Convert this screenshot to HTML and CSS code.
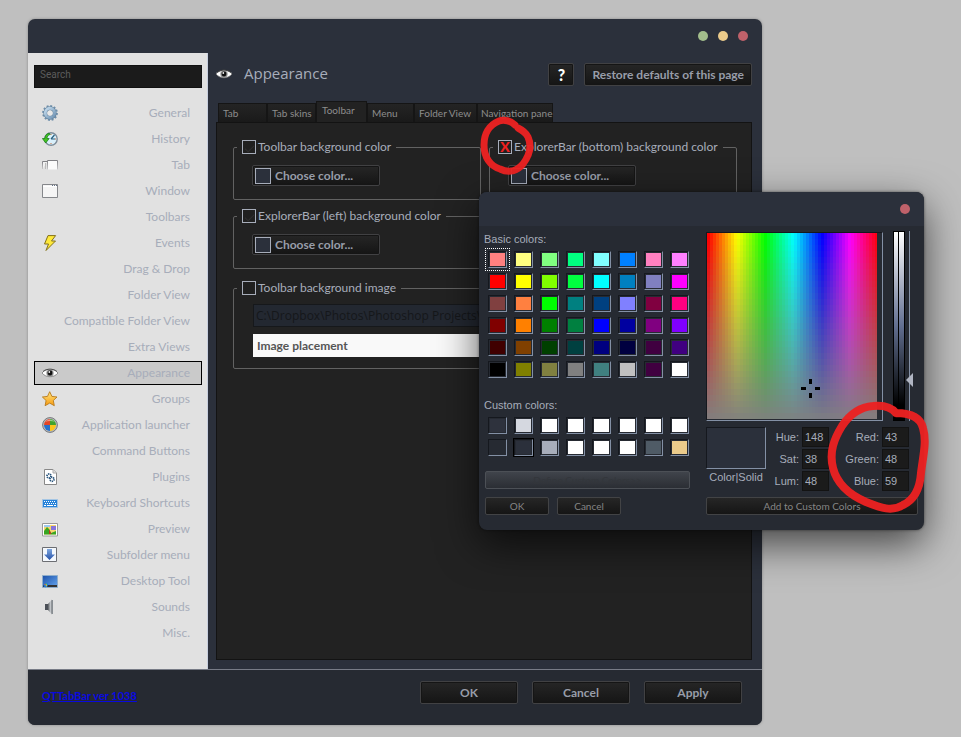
FILE: index.html
```html
<!DOCTYPE html>
<html lang="en">
<head>
<meta charset="utf-8">
<title>Appearance</title>
<link rel="stylesheet" href="styles.css">
</head>
<body>
<svg class="defs" width="0" height="0" aria-hidden="true">
  <defs>
    <linearGradient id="steel" x1="0" y1="0" x2="1" y2="1"><stop offset="0" stop-color="#c5dcee"/><stop offset="1" stop-color="#6f93b4"/></linearGradient>
    <linearGradient id="fade" x1="0" y1="0" x2="0" y2="1"><stop offset="0" stop-color="#808084"/><stop offset="1" stop-color="#c8c8ca"/></linearGradient>
    <linearGradient id="gold" x1="0" y1="0" x2="0" y2="1"><stop offset="0" stop-color="#ffe680"/><stop offset="1" stop-color="#f79a10"/></linearGradient>
    <linearGradient id="arrow" x1="0" y1="0" x2="0" y2="1"><stop offset="0" stop-color="#7fa8e0"/><stop offset="1" stop-color="#2450a8"/></linearGradient>
    <linearGradient id="desk" x1="0" y1="0" x2="1" y2="1"><stop offset="0" stop-color="#1a4fa8"/><stop offset="1" stop-color="#68a8f0"/></linearGradient>
    <linearGradient id="horn" x1="0" y1="0" x2="1" y2="0"><stop offset="0" stop-color="#55585c"/><stop offset=".6" stop-color="#c5c9cd"/><stop offset="1" stop-color="#787c80"/></linearGradient>
    <symbol id="eye" viewBox="0 0 16 16">
      <path d="M0 8C4 3 12 3 16 8C12 13 4 13 0 8Z" fill="#fff" stroke="#777" stroke-width=".8"/>
      <path d="M1 6.500C4.500 3.400 11.500 3.400 15 6.500" fill="none" stroke="#333" stroke-width=".8"/>
      <circle cx="8" cy="8" r="3.600" fill="#888"/><circle cx="8" cy="8" r="2.400" fill="#111"/><circle cx="7.300" cy="7" r=".9" fill="#eee"/>
    </symbol>
  </defs>
</svg>
<div class="desktop">
  <main class="window">
    <div class="titlebar">
      <button class="dot green" aria-label="Minimize"></button>
      <button class="dot yellow" aria-label="Maximize"></button>
      <button class="dot red" aria-label="Close"></button>
    </div>
    <div class="content">
      <nav class="sidebar">
        <input class="search" type="search" placeholder="Search" aria-label="Search">
        <ul class="menu">
          <li><a href="#"><svg viewBox="0 0 16 16"><circle cx="8" cy="8" r="6.800" fill="none" stroke="#6f8faa" stroke-width="2.200" stroke-dasharray="1.900 1.660"/><circle cx="8" cy="8" r="4.700" fill="none" stroke="#64829c" stroke-width="4"/><circle cx="8" cy="8" r="4.700" fill="none" stroke="url(#steel)" stroke-width="2.900"/><circle cx="8" cy="8" r="2.600" fill="#e8e8e8"/></svg><span>General</span></a></li>
          <li><a href="#"><svg viewBox="0 0 16 16"><circle cx="9" cy="8" r="6.200" fill="#d9effa" stroke="#7d8c99" stroke-width="1.400"/><path d="M9 8L12.500 4M9 8H13" stroke="#286080" stroke-width="1.200"/><path d="M9 3v1M14 8h-1M9 13v-1" stroke="#cc6c3c"/><path d="M7 2.200C4 3 2.800 5.400 2.800 7.500H.4L3.700 12L7.200 7.500H5C5 5.500 6.200 4 8.300 3.300Z" fill="#43c321" stroke="#137615" stroke-width=".7"/></svg><span>History</span></a></li>
          <li><a href="#"><svg viewBox="0 0 16 16"><path d="M.5 12V4.500H5.500" fill="#f2f2f2" stroke="url(#fade)"/><path d="M3.500 6V12" stroke="#bbb"/><path d="M5.500 12.500V3.500H15.500V12.500" fill="#fbfbfb" stroke="url(#fade)"/></svg><span>Tab</span></a></li>
          <li><a href="#"><svg viewBox="0 0 16 16"><path d="M.5 1.500H15.500V14.500H.5Z" fill="#f5f5f5" stroke="#85878b"/><path d="M1 3.500H15" stroke="#fff"/><path d="M10 2.500H15" stroke="#66758a" stroke-dasharray="1 1"/></svg><span>Window</span></a></li>
          <li><a href="#"><span>Toolbars</span></a></li>
          <li><a href="#"><svg viewBox="0 0 16 16"><path d="M6 .6H13.600L9.500 6H13.500L4 15.500L6.500 9H2.500Z" fill="#ffe93b" stroke="#82701a"/></svg><span>Events</span></a></li>
          <li><a href="#"><span>Drag &amp; Drop</span></a></li>
          <li><a href="#"><span>Folder View</span></a></li>
          <li><a href="#"><span>Compatible Folder View</span></a></li>
          <li><a href="#"><span>Extra Views</span></a></li>
          <li><a href="#" class="current" aria-current="page"><svg><use href="#eye"/></svg><span>Appearance</span></a></li>
          <li><a href="#"><svg viewBox="0 0 16 16"><path d="M7.700.7L9.900 5.400L15 6L11.300 9.500L12.300 14.700L7.700 12.100L3.100 14.700L4.100 9.500L.4 6L5.500 5.400Z" fill="url(#gold)" stroke="#b8791a" stroke-width=".9"/></svg><span>Groups</span></a></li>
          <li><a href="#"><svg viewBox="0 0 16 16"><circle cx="8" cy="8" r="7.400" fill="#b9bcbf" stroke="#77797d"/><path d="M8 8H2A6 6 0 0 1 8 2Z" fill="#e34526"/><path d="M8 8H14A6 6 0 0 0 8 2Z" fill="#40a32c"/><path d="M8 8H2A6 6 0 0 0 8 14Z" fill="#2670cb"/><path d="M8 8H14A6 6 0 0 1 8 14Z" fill="#fbc51c"/><path d="M3 5Q8 0 13 5Q8 3 3 5Z" fill="#fff" opacity=".45"/></svg><span>Application launcher</span></a></li>
          <li><a href="#"><span>Command Buttons</span></a></li>
          <li><a href="#"><svg viewBox="0 0 16 16"><path d="M2.500.5H11L14.500 4V15.500H2.500Z" fill="#fff" stroke="#888"/><path d="M11 .5V4H14.500" fill="#ddd" stroke="#aaa"/><g fill="none" stroke="#28547c" stroke-width="1.800"><circle cx="7" cy="7" r="2" stroke-dasharray="1.200 .7"/><circle cx="10" cy="10.300" r="2" stroke-dasharray="1.200 .7"/></g></svg><span>Plugins</span></a></li>
          <li><a href="#"><svg viewBox="0 0 16 16"><path d="M.5 4.500H15.500V12.500H.5Z" fill="#2682d9" stroke="#a5c6e4"/><path d="M2 6.500H14M3 8.500H14" stroke="#fff" stroke-dasharray="1 1"/><path d="M2 10.500H4M5 10.500H11M12 10.500H14" stroke="#fff"/></svg><span>Keyboard Shortcuts</span></a></li>
          <li><a href="#"><svg viewBox="0 0 16 16"><path d="M.5 2.500H15.500V15H.5Z" fill="#fff" stroke="#999"/><path d="M2 4H14V13.500H2Z" fill="#f8d66d"/><path d="M9 5H14V9H9Z" fill="#8675dc"/><path d="M2 4H8V6H2Z" fill="#9dc9ef"/><path d="M2 13.500V10L5 6L7 8L9 12L14 10V13.500Z" fill="#37a522"/><path d="M7 8L9.500 13H7Z" fill="#bd3a1c"/></svg><span>Preview</span></a></li>
          <li><a href="#"><svg viewBox="0 0 16 16"><path d="M.5.5H14.500V14.500H.5Z" fill="#f4f8fd" stroke="#6c6e73"/><path d="M5 2H10V7.500H13L7.500 13L2 7.500H5Z" fill="url(#arrow)"/></svg><span>Subfolder menu</span></a></li>
          <li><a href="#"><svg viewBox="0 0 16 16"><path d="M.5 2.500H15.500V14.500H.5Z" fill="url(#desk)" stroke="#8faecb"/><path d="M1 12H15V14H1Z" fill="#333"/><circle cx="3.600" cy="12" r="2.300" fill="#1b77d5"/><path d="M2.300 10.700H3.500V12H2.300Z" fill="#ef5931"/><path d="M3.700 10.700H5V12H3.700Z" fill="#8cd13b"/><path d="M3.700 12.200H5V13.300H3.700Z" fill="#ffd13b"/></svg><span>Desktop Tool</span></a></li>
          <li><a href="#"><svg viewBox="0 0 16 16"><path d="M3 5H6V11H3Z" fill="#4b5058"/><path d="M6 5L10 .5V15.500L6 11Z" fill="url(#horn)"/><path d="M10.500 1V15" stroke="#888e93"/></svg><span>Sounds</span></a></li>
          <li><a href="#"><span>Misc.</span></a></li>
        </ul>
      </nav>
      <section class="page">
        <header class="page-head">
          <svg class="head-icon"><use href="#eye"/></svg>
          <h1>Appearance</h1>
          <button class="btn help">?</button>
          <button class="btn">Restore defaults of this page</button>
        </header>
        <div class="tabs" role="tablist">
          <button role="tab">Tab</button>
          <button role="tab">Tab skins</button>
          <button role="tab" class="active" aria-selected="true">Toolbar</button>
          <button role="tab" class="narrow">Menu</button>
          <button role="tab" class="wide">Folder View</button>
          <button role="tab" class="widest">Navigation pane</button>
        </div>
        <div class="panel">
          <fieldset>
            <legend><label><input type="checkbox" class="ghost"><span>Toolbar background color</span></label></legend>
            <button class="btn choose"><i></i>Choose color...</button>
          </fieldset>
          <fieldset>
            <legend><label><input type="checkbox" checked><span>ExplorerBar (bottom) background color</span></label>
              <svg class="ring-small" viewBox="0 0 56 60"><path d="M36 9C32 5 25 3 20 5C10 9 5 18 5 29C5 41 11 50 21 53C31 58 39 54 44 48C50 40 53 30 49 21C47 17 43 14 39 12"/></svg>
            </legend>
            <button class="btn choose"><i></i>Choose color...</button>
          </fieldset>
          <fieldset>
            <legend><label><input type="checkbox" class="ghost"><span>ExplorerBar (left) background color</span></label></legend>
            <button class="btn choose"><i></i>Choose color...</button>
          </fieldset>
          <fieldset class="image">
            <legend><label><input type="checkbox"><span>Toolbar background image</span></label></legend>
            <input class="path" type="text" aria-label="Image path" value="C:\Dropbox\Photos\Photoshop Projects\Wallpapers" disabled>
            <select class="placement" aria-label="Image placement"><option>Image placement</option></select>
          </fieldset>
        </div>
      </section>
    </div>
    <footer class="foot">
      <a href="#">QTTabBar ver 1038</a>
      <button class="btn">OK</button>
      <button class="btn">Cancel</button>
      <button class="btn">Apply</button>
    </footer>
  </main>

  <div class="dialog" role="dialog" aria-label="Color">
    <div class="titlebar"><button class="dot red" aria-label="Close"></button></div>
    <div class="picker">
      <div class="palettes">
        <h2>Basic colors:</h2>
        <div class="swatches" id="basic"></div>
        <h2 class="second">Custom colors:</h2>
        <div class="swatches" id="custom"></div>
        <button class="mini define" disabled>Define Custom Colors&gt;&gt;</button>
        <div class="actions"><button class="mini">OK</button><button class="mini">Cancel</button></div>
      </div>
      <div class="mixer">
        <div class="fields">
          <div class="spectrum"><canvas id="spectrum" width="170" height="186"></canvas>
            <svg class="cross" viewBox="0 0 19 19"><path d="M8 0h3v5h-3zM8 14h3v5h-3zM0 8h5v3h-5zM14 8h5v3h-5z"/></svg>
          </div>
          <div class="lum"><div class="ramp"></div><svg class="pointer" viewBox="0 0 8 14"><path d="M0 7L7 0V14Z"/></svg></div>
        </div>
        <div class="values">
          <div class="sample"><div class="chip"></div><span>Color|Solid</span></div>
          <label for="h">Hue:</label><input id="h" value="148"><label for="r">Red:</label><input id="r" value="43">
          <label for="s">Sat:</label><input id="s" value="38"><label for="g">Green:</label><input id="g" value="48">
          <label for="l">Lum:</label><input id="l" value="48"><label for="b">Blue:</label><input id="b" value="59">
        </div>
        <button class="mini">Add to Custom Colors</button>
      </div>
    </div>
    <svg class="ring-large" viewBox="0 0 104 116"><path d="M71 15C66 9 58 7 48 8C35 9 25 16 17 28C9 41 4 54 8 70C12 86 25 97 41 104C56 110 67 114 78 107C91 101 95 89 96 75C98 58 102 44 98 30C95 18 84 15 71 15"/></svg>
  </div>
</div>
<script src="script.js"></script>
</body>
</html>
```
FILE: styles.css
```css
* { box-sizing: border-box; }
body {
  margin: 0;
  background: #bfbfbf;
  color: #a7adba;
  font: 12px/16px Lato, "Open Sans", sans-serif;
}
button, input, select { font: inherit; color: inherit; margin: 0; border-radius: 0; }
.defs { position: absolute; }
.desktop {
  position: relative;
  min-height: 100vh;
  padding: 19px 199px 12px 28px;
}
.window {
  min-width: 720px;
  border-radius: 7px;
  background: #2b303b;
  overflow: hidden;
  box-shadow: 0 0 3px #888;
}
.titlebar {
  display: flex;
  justify-content: flex-end;
  align-items: center;
  gap: 10px;
  height: 34px;
  padding-right: 14px;
}
.dot { width: 10px; height: 10px; padding: 0; border: 0; border-radius: 50%; }
.green { background: #a3be8c; }
.yellow { background: #ebcb8b; }
.red { background: #bf616a; }

.content { display: flex; }
.sidebar {
  width: 180px;
  padding: 12px 5px 23px 6px;
  background: #e1e1e1;
  border-right: 1px solid #c7cede;
}
.search {
  display: block;
  width: 100%;
  height: 23px;
  padding: 0 5px 4px;
  border: 1px solid #111;
  background: #1b1b1b;
  font: 10px Roboto, sans-serif;
}
.search::placeholder { color: #5c5c5c; }
.menu { display: grid; grid-auto-rows: 24px; gap: 2px; list-style: none; margin: 13px 0 0; padding: 0 0 1px; }
.menu a {
  display: flex;
  align-items: center;
  height: 24px;
  padding: 0 11px 0 7px;
  border: 1px solid transparent;
  color: #a7adba;
  text-decoration: none;
}
.menu svg { width: 16px; height: 16px; }
.menu span { margin-left: auto; }
.menu .current { border-color: #000; background: #cacaca; }

.page { flex: 1; padding: 0 10px 9px 8px; display: flex; flex-direction: column; }
.page-head { display: flex; height: 48px; padding-top: 10px; }
.head-icon { width: 16px; height: 16px; margin: 3px 12px 0 0; }
h1 { flex: 1; margin: 0; font: 15px/20px "Open Sans", sans-serif; }
.btn {
  height: 23px;
  padding: 0 7px;
  border: 1px solid #414143;
  border-radius: 2px;
  background: linear-gradient(#262626, #151515);
  box-shadow: inset 0 0 0 1px #151515;
  color: #989da9;
  font: 700 12px/16px Lato, "Open Sans", sans-serif;
  white-space: nowrap;
}
.help { width: 26px; padding: 0; margin-right: 10px; color: #fff; font-size: 16px; font-weight: 900; }
.tabs { display: flex; align-items: flex-end; height: 21px; padding-left: 2px; }
.tabs button {
  width: 49px;
  height: 19px;
  padding: 0 4px;
  border: 1px solid #151515;
  border-bottom: 0;
  background: linear-gradient(#242424, #1a1a1a);
  color: #8d8d8d;
  font: 10px Lato, sans-serif;
  text-align: left;
  white-space: nowrap;
}
.tabs .active { width: 51px; height: 21px; padding: 0 5px 4px; background: #222; }
.tabs .narrow { width: 47px; }
.tabs .wide { width: 63px; }
.tabs .widest { width: 76px; padding: 0 3px; }
.panel {
  flex: 1;
  display: grid;
  grid-template-columns: 1fr 1fr;
  grid-template-rows: 61px 61px 89px;
  gap: 8px;
  padding: 16px 14px 0 16px;
  border: 1px solid #131313;
  background: #222;
}
fieldset {
  min-width: 0;
  margin: 0;
  padding: 10px 18px 0;
  border: 1px solid #626262;
  border-radius: 2px;
}
legend { position: relative; margin-left: -15px; padding: 0 5px; }
legend label { display: flex; align-items: center; gap: 2px; height: 16px; white-space: nowrap; }
legend input {
  appearance: none;
  display: grid;
  place-items: center;
  width: 14px;
  height: 14px;
  border: 1px solid #a7adba;
  background: #202020;
}
legend input:checked::after { content: "X"; color: #f02020; font: 900 14px/12px Lato, sans-serif; }
.ghost::after {
  content: "";
  width: 8px;
  height: 4px;
  border: solid #303030;
  border-width: 0 0 1px 1px;
  transform: rotate(-45deg);
}
.choose { display: flex; align-items: center; gap: 4px; width: 128px; height: 21px; padding: 0 2px; }
.choose i { width: 16px; height: 16px; border: 1px solid #a7adba; background: #2b303b; }
.image { grid-column: 1 / -1; margin-top: 3px; height: 89px; padding: 8px 19px 0; }
.image legend { margin-left: -16px; }
.path {
  display: block;
  width: 100%;
  height: 23px;
  padding: 0 2px;
  border: 1px solid #16181b;
  background: #232831;
  color: #15171a;
  font-family: "Open Sans", sans-serif;
}
.placement {
  appearance: none;
  display: block;
  width: 100%;
  height: 23px;
  margin-top: 7px;
  padding: 0 4px;
  border: 0;
  background: #f9f9f9;
  color: #555;
  font-weight: 700;
}
.foot {
  display: flex;
  align-items: center;
  gap: 14px;
  height: 56px;
  padding: 0 20px 10px 14px;
  border-top: 1px solid #777b86;
  background: #262a32;
}
.foot a { margin-right: auto; padding-top: 7px; color: #0909e0; font-size: 11px; font-weight: 700; }
.foot .btn { width: 98px; }

.dialog {
  position: absolute;
  top: 192px;
  right: 37px;
  width: 445px;
  border-radius: 8px;
  background: #262a32;
  box-shadow: 0 14px 40px rgba(0, 0, 0, .65), 0 0 3px rgba(0, 0, 0, .5);
  font: 11px/16px "Liberation Sans", Arial, sans-serif;
}
.dialog .titlebar { border-radius: 8px 8px 0 0; background: #2b303b; }
.picker { display: flex; gap: 16px; padding: 5px 6px 15px; }
.palettes { flex: 205; }
.mixer { flex: 212; }
h2 { margin: 0 0 0 -1px; font: inherit; }
.second { margin-top: 19px; }
.swatches {
  display: grid;
  grid-template-columns: repeat(8, 19px);
  justify-content: space-between;
  row-gap: 5px;
  margin: 4px 1px 0 3px;
}
.swatches button {
  height: 17px;
  padding: 0;
  border: 1px solid #15181e;
  border-right-color: #8390a5;
  border-bottom-color: #8390a5;
  box-shadow: inset 0 0 0 1px #262a32;
}
.swatches .focus { outline: 1px dotted #fff; outline-offset: 2px; }
.swatches .chosen { outline: 1px solid #000; }
.mini {
  height: 18px;
  width: 64px;
  padding: 0;
  border: 1px solid #424345;
  border-radius: 2px;
  background: linear-gradient(#262626, #151515);
  color: #858585;
  font: 10px Lato, sans-serif;
}
.define { display: block; width: 100%; margin-top: 15px; background: linear-gradient(#40444b, #2b2e34); border-color: #4c5056; color: #33363b; }
.actions { display: flex; gap: 8px; margin-top: 8px; }
.mixer .mini { display: block; width: 100%; margin-top: 6px; }
.fields { display: flex; gap: 10px; height: 190px; }
.spectrum {
  position: relative;
  width: 177px;
  height: 189px;
  margin-top: 1px;
  border: 1px solid #15181e;
  border-right-color: #8390a5;
  border-bottom-color: #8390a5;
}
.spectrum canvas { display: block; }
.cross { position: absolute; left: 94px; top: 146px; width: 19px; height: 19px; }
.lum { position: relative; width: 17px; border-right: 1px solid #8390a5; }
.ramp {
  width: 12px;
  height: 190px;
  border: 1px solid #000;
  background:
    linear-gradient(90deg, transparent 4px, #000 4px, #000 5px, transparent 5px),
    linear-gradient(#fff, #626f91 50%, #262c38 75%, #000 92%);
}
.pointer { position: absolute; left: 13px; top: 142px; width: 8px; height: 14px; fill: #b0b5c2; }
.values {
  display: grid;
  grid-template-columns: 60px 30px 27px 47px 27px;
  grid-auto-rows: 20px;
  gap: 2px 3px;
  align-items: center;
  margin-top: 6px;
}
.values label { text-align: right; }
.values input {
  width: 100%;
  height: 20px;
  padding: 0 2px;
  border: 1px solid #131313;
  background: #1b1b1b;
}
.sample { grid-row: 1 / 4; align-self: start; text-align: center; }
.chip { height: 42px; border: 1px solid #15181e; border-right-color: #8390a5; border-bottom-color: #8390a5; background: #2b303b; }
.ring-small, .ring-large { position: absolute; fill: none; stroke: #ec2222; stroke-linecap: round; opacity: .96; pointer-events: none; }
.ring-small { left: -14px; top: -23px; width: 56px; height: 60px; stroke-width: 7; }
.ring-large { right: -5px; top: 206px; width: 104px; height: 116px; stroke-width: 8; }
```
FILE: script.js
```js
const basic = `ff8080 ffff80 80ff80 00ff80 80ffff 0080ff ff80c0 ff80ff
ff0000 ffff00 80ff00 00ff40 00ffff 0080c0 8080c0 ff00ff
804040 ff8040 00ff00 008080 004080 8080ff 800040 ff0080
800000 ff8000 008000 008040 0000ff 0000a0 800080 8000ff
400000 804000 004000 004040 000080 000040 400040 400080
000000 808000 808040 808080 408080 c0c0c0 400040 ffffff`.split(/\s+/);
const custom = `2e323d d5d8e0 ffffff ffffff ffffff ffffff ffffff ffffff
262a32 2b303b a7adba ffffff ffffff ffffff 4f5b66 ebcb8b`.split(/\s+/);

function fill(id, colors, marked, className) {
  const box = document.getElementById(id);
  colors.forEach((color, i) => {
    const button = document.createElement("button");
    button.style.backgroundColor = "#" + color;
    button.setAttribute("aria-label", "#" + color);
    if (i === marked) button.className = className;
    box.append(button);
  });
}
fill("basic", basic, 0, "focus");
fill("custom", custom, 9, "chosen");

// Hue runs across, saturation falls toward the bottom, in coarse cells.
const ctx = document.getElementById("spectrum").getContext("2d");
for (let x = 0; x < 170; x += 3) {
  for (let y = 0; y < 186; y += 6) {
    ctx.fillStyle = `hsl(${x / 170 * 360} ${100 - y / 186 * 100}% 50%)`;
    ctx.fillRect(x, y, 3, 6);
  }
}
```
